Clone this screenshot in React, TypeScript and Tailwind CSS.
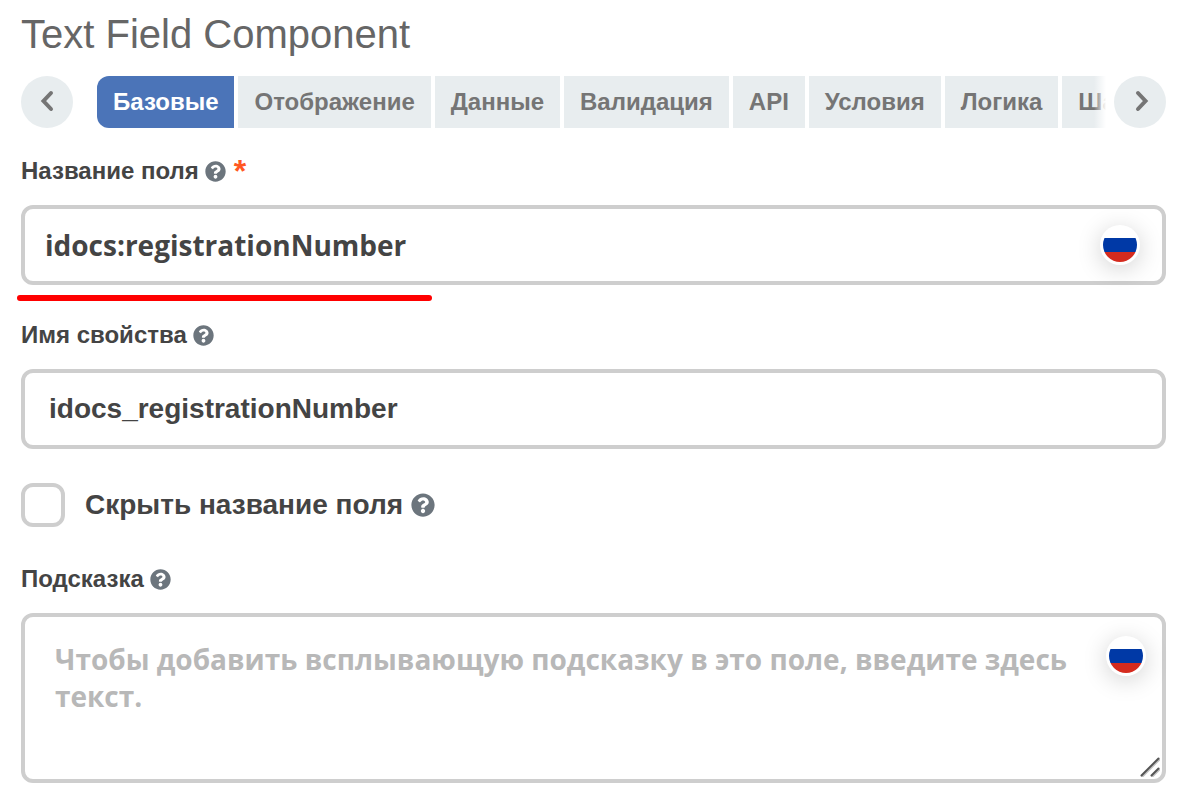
import { useState } from "react";
import { FaQuestionCircle } from "react-icons/fa";

const tabs = ["Базовые", "Отображение", "Данные", "Валидация", "API", "Условия", "Логика", "Шаблоны"];

function Chevron({ direction }: { direction: "left" | "right" }) {
  return (
    <svg
      viewBox="0 0 24 24"
      className="size-6"
      fill="none"
      stroke="currentColor"
      strokeWidth="4"
      strokeLinecap="round"
      strokeLinejoin="miter"
      aria-hidden="true"
    >
      <path d={direction === "left" ? "M16 3 L8.5 11 L16 19" : "M10 3 L17.5 11 L10 19"} />
    </svg>
  );
}

function ScrollButton({ direction, label }: { direction: "left" | "right"; label: string }) {
  return (
    <button
      type="button"
      aria-label={label}
      className="flex size-13 shrink-0 items-center justify-center rounded-full bg-[#e8edef] text-[#757575]"
    >
      <Chevron direction={direction} />
    </button>
  );
}

function LanguageButton() {
  return (
    <button
      type="button"
      aria-label="Русский"
      className="size-10 rounded-full bg-white p-[3px] shadow-[0_4px_24px_rgba(0,0,0,0.18)]"
    >
      <svg viewBox="0 0 34 34" className="size-full rounded-full" aria-hidden="true">
        <path fill="#fff" d="M0 0h34v10H0z" />
        <path fill="#0039a6" d="M0 10h34v14H0z" />
        <path fill="#d52b1e" d="M0 24h34v10H0z" />
      </svg>
    </button>
  );
}

function FieldLabel({ htmlFor, text, required }: { htmlFor: string; text: string; required?: boolean }) {
  return (
    <label htmlFor={htmlFor} className="flex h-9 items-center text-2xl font-bold">
      {text}
      <FaQuestionCircle className="ml-1.5 size-[21px] text-[#6c757d]" />
      {required && <span className="ml-2 text-[32px] leading-9 text-[#ff5722]">*</span>}
    </label>
  );
}

const boxStyle = "block w-full rounded-xl border-4 border-[#cecece] bg-white font-bold outline-none";

export default function App() {
  const [active, setActive] = useState(tabs[0]);

  return (
    <main className="min-h-screen bg-white pr-[26px] pb-5 pl-[21px] font-['Liberation_Sans',Arial,sans-serif] text-[#444444]">
      <h1 className="pt-2 text-[40px] leading-[52px] text-[#666666]">Text Field Component</h1>

      <nav className="mt-4 flex">
        <ScrollButton direction="left" label="Назад" />
        <div className="relative ml-6 min-w-0 flex-1 overflow-hidden">
          <div role="tablist" className="flex gap-1">
            {tabs.map((tab) => (
              <button
                key={tab}
                type="button"
                role="tab"
                aria-selected={tab === active}
                onClick={() => setActive(tab)}
                className={
                  tab === active
                    ? "h-13 shrink-0 bg-[#4b74b8] px-4 text-2xl font-bold text-white first:rounded-l-xl"
                    : "h-13 shrink-0 bg-[#e8edef] px-4 text-2xl font-bold text-[#757575] first:rounded-l-xl"
                }
              >
                {tab}
              </button>
            ))}
          </div>
          <div className="pointer-events-none absolute inset-y-0 right-0 w-3 bg-linear-to-r from-white/0 to-white" />
        </div>
        <div className="ml-2 flex">
          <ScrollButton direction="right" label="Вперёд" />
        </div>
      </nav>

      <form className="mt-[25px] flex flex-col gap-8">
        <div className="relative flex flex-col gap-4">
          <FieldLabel htmlFor="field-title" text="Название поля" required />
          <div className="relative">
            <input
              id="field-title"
              type="text"
              defaultValue="idocs:registrationNumber"
              className={`${boxStyle} h-20 pr-24 pl-5 font-['Open_Sans','Noto_Sans',sans-serif] text-[28px]`}
            />
            <div className="absolute top-5 right-[26px] flex">
              <LanguageButton />
            </div>
          </div>
          <div className="absolute top-full -left-1 mt-2.5 h-1.5 w-[415px] rounded-full bg-[#ff0000]" />
        </div>

        <div className="flex flex-col gap-4">
          <FieldLabel htmlFor="property-name" text="Имя свойства" />
          <input
            id="property-name"
            type="text"
            defaultValue="idocs_registrationNumber"
            className={`${boxStyle} h-20 px-6 text-[28px]`}
          />
        </div>

        <label className="flex h-12 items-center text-[28px] font-bold">
          <input
            type="checkbox"
            className="mr-5 size-11 appearance-none rounded-xl border-4 border-[#cecece] bg-white checked:bg-[#4b74b8]"
          />
          Скрыть название поля
          <FaQuestionCircle className="ml-2 size-6 text-[#6c757d]" />
        </label>

        <div className="flex flex-col gap-4">
          <FieldLabel htmlFor="field-hint" text="Подсказка" />
          <div className="relative">
            <textarea
              id="field-hint"
              placeholder="Чтобы добавить всплывающую подсказку в это поле, введите здесь текст."
              className={`${boxStyle} h-[170px] resize-none py-6 pr-20 pl-[30px] font-['Open_Sans','Noto_Sans',sans-serif] text-[28px] leading-[37px] placeholder:text-[#b8b8b8]`}
            />
            <div className="absolute top-[23px] right-5 flex">
              <LanguageButton />
            </div>
            <svg
              viewBox="0 0 20 20"
              className="pointer-events-none absolute right-1.5 bottom-1.5 size-5"
              fill="none"
              strokeLinecap="round"
              aria-hidden="true"
            >
              <path stroke="#c4c4c4" strokeWidth="2" d="M2.5 19.5 L19.5 2.5 M12.5 19.5 L19.5 12.5" />
              <path stroke="#555555" strokeWidth="2" d="M1.5 18.5 L18.5 1.5 M11.5 18.5 L18.5 11.5" />
            </svg>
          </div>
        </div>
      </form>
    </main>
  );
}
